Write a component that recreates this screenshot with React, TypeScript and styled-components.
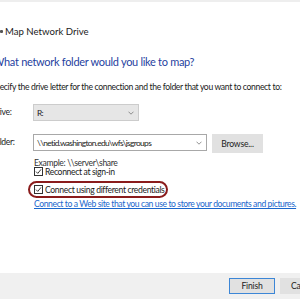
import React from "react";
import styled, { createGlobalStyle } from "styled-components";

const GlobalStyle = createGlobalStyle`
  html, body {
    margin: 0;
    padding: 0;
    background: #ffffff;
  }
  body {
    width: 300px;
    height: 300px;
    overflow: hidden;
    font-family: Lato, "Noto Sans", sans-serif;
    color: #1a1a1a;
  }
`;

const Dialog = styled.div`
  width: 300px;
  height: 300px;
  display: flex;
  flex-direction: column;
  overflow: hidden;
  background: #fff;
`;

const TopEdge = styled.div`
  height: 2px;
  background: #eeeeee;
  flex-shrink: 0;
`;

const Content = styled.div`
  flex: 1;
  display: flex;
  flex-direction: column;
  margin-left: -10px;
  white-space: nowrap;
  font-size: 8.6px;
  letter-spacing: -0.35px;
`;

const TitleBar = styled.div`
  display: flex;
  align-items: center;
  gap: 2px;
  height: 14px;
  margin-top: 22px;
  padding-left: 10px;
  font-size: 9.6px;
  letter-spacing: 0;
  color: #222;
`;

const DriveIcon = styled.span`
  width: 3px;
  height: 3px;
  background: #555;
  border-radius: 1px;
`;

const Heading = styled.h1`
  margin: 17px 0 0 3px;
  font-size: 11px;
  letter-spacing: -0.3px;
  font-weight: 400;
  color: #1f3fa0;
  line-height: 14px;
`;

const Intro = styled.p`
  margin: 12px 0 0 1px;
  line-height: 12px;
`;

const Grid = styled.div`
  display: grid;
  grid-template-columns: 43px auto;
  row-gap: 13px;
  margin-top: 11px;
  align-items: start;
`;

const Label = styled.span`
  padding-left: 1px;
  line-height: 17px;
`;

const FieldRow = styled.div`
  display: flex;
  align-items: flex-start;
  gap: 5px;
`;

const Combo = styled.div<{ $width: number; $filled?: boolean }>`
  width: ${(p) => p.$width}px;
  height: 17px;
  box-sizing: border-box;
  border: 1px solid ${(p) => (p.$filled ? "#cccccc" : "#a8a8a8")};
  background: ${(p) => (p.$filled ? "#e6e6e6" : "#ffffff")};
  display: flex;
  align-items: center;
  justify-content: space-between;
  padding: 0 4px 0 3px;
  font-size: 8.4px;
  letter-spacing: -0.65px;
  color: #222;
`;

const Chevron = () => (
  <svg width="6" height="4" viewBox="0 0 6 4">
    <path d="M0.5 0.7 L3 3.2 L5.5 0.7" fill="none" stroke="#777" strokeWidth="0.8" />
  </svg>
);

const Button = styled.div<{ $primary?: boolean; $width: number; $height: number }>`
  width: ${(p) => p.$width}px;
  height: ${(p) => p.$height}px;
  box-sizing: border-box;
  background: #e1e1e1;
  border: 1px solid ${(p) => (p.$primary ? "#3c86d6" : "#e1e1e1")};
  display: flex;
  align-items: center;
  justify-content: center;
  font-size: 8.6px;
  letter-spacing: -0.2px;
  color: #222;
  flex-shrink: 0;
`;

const Options = styled.div`
  display: flex;
  flex-direction: column;
  margin-left: 44px;
  margin-top: 5px;
`;

const Example = styled.div`
  color: #333;
  line-height: 11px;
`;

const CheckRow = styled.label<{ $gap: number }>`
  display: flex;
  align-items: center;
  gap: 2px;
  height: 11px;
  margin-top: ${(p) => p.$gap}px;
  position: relative;
`;

const Box = styled.span`
  width: 9px;
  height: 9px;
  box-sizing: border-box;
  border: 1px solid #333;
  display: flex;
  align-items: center;
  justify-content: center;
  background: #fff;
`;

const Ring = styled.span`
  position: absolute;
  left: -6px;
  top: -3px;
  width: 140px;
  height: 17px;
  box-sizing: border-box;
  border: 2px solid #8a1c1c;
  border-radius: 9px;
  pointer-events: none;
`;

const Tick = () => (
  <svg width="7" height="7" viewBox="0 0 7 7">
    <path d="M1 3.6 L2.8 5.4 L6 1.4" fill="none" stroke="#222" strokeWidth="0.9" />
  </svg>
);

const WebLink = styled.a`
  margin-top: 3px;
  color: #1a66cc;
  text-decoration: underline;
  letter-spacing: -0.4px;
  line-height: 12px;
`;

const Footer = styled.div`
  height: 26px;
  margin-top: auto;
  margin-bottom: 1px;
  background: #f0f0f0;
  display: flex;
  align-items: center;
  justify-content: flex-end;
  flex-shrink: 0;
  overflow: hidden;
`;

const FooterButtons = styled.div`
  display: flex;
  gap: 5px;
  margin-right: -26px;
`;

export default function App() {
  return (
    <>
      <GlobalStyle />
      <Dialog>
        <TopEdge />
        <Content>
          <TitleBar>
            <DriveIcon />
            <span>Map Network Drive</span>
          </TitleBar>
          <Heading>What network folder would you like to map?</Heading>
          <Intro>
            Specify the drive letter for the connection and the folder that you want to connect to:
          </Intro>
          <Grid>
            <Label>Drive:</Label>
            <FieldRow>
              <Combo $width={106} $filled>
                <span>R:</span>
                <Chevron />
              </Combo>
            </FieldRow>
            <Label>Folder:</Label>
            <FieldRow>
              <Combo $width={174}>
                <span>\\netid.washington.edu\wfs\jsgroups</span>
                <Chevron />
              </Combo>
              <Button $width={51} $height={19}>Browse...</Button>
            </FieldRow>
          </Grid>
          <Options>
            <Example>Example: \\server\share</Example>
            <CheckRow $gap={-3}>
              <Box>
                <Tick />
              </Box>
              Reconnect at sign-in
            </CheckRow>
            <CheckRow $gap={7}>
              <Ring />
              <Box>
                <Tick />
              </Box>
              Connect using different credentials
            </CheckRow>
            <WebLink>Connect to a Web site that you can use to store your documents and pictures.</WebLink>
          </Options>
        </Content>
        <Footer>
          <FooterButtons>
            <Button $primary $width={46} $height={16}>Finish</Button>
            <Button $width={46} $height={16}>Cancel</Button>
          </FooterButtons>
        </Footer>
      </Dialog>
    </>
  );
}
